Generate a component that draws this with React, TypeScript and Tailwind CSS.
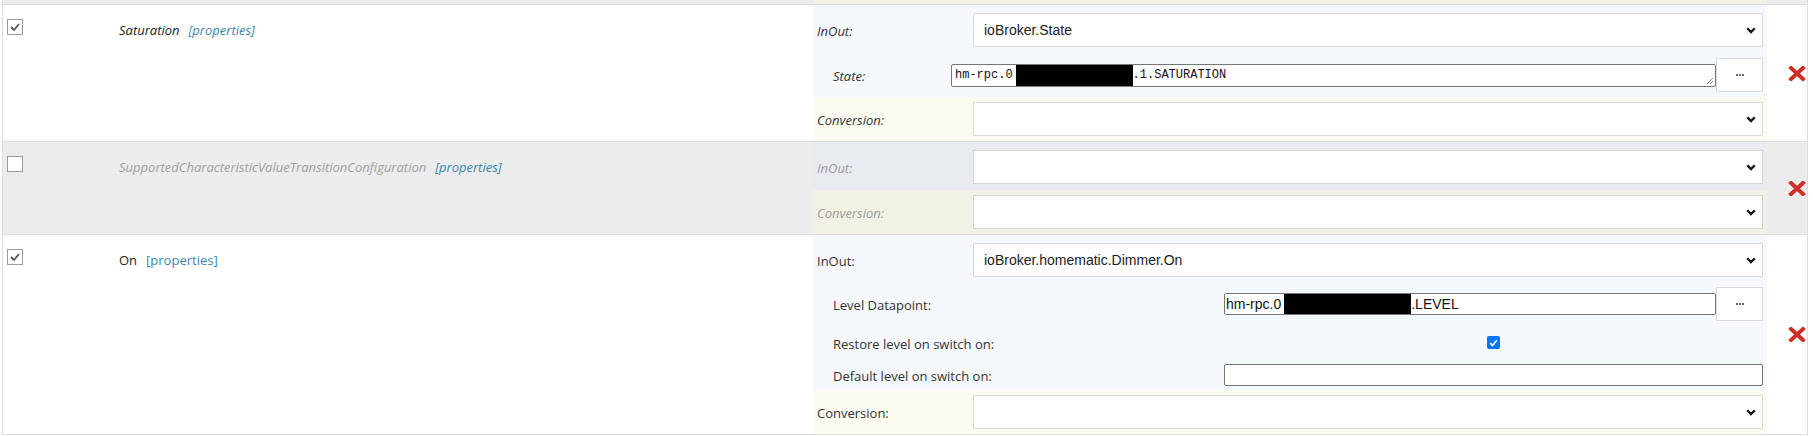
import React from "react";

const sans = "font-['Open_Sans',sans-serif]";
const arial = "font-['Liberation_Sans',Arial,sans-serif]";
const mono = "font-['Liberation_Mono','DejaVu_Sans_Mono',monospace]";

function OldCheck({ checked }: { checked: boolean }) {
  return (
    <span className="mt-[14px] ml-[4px] flex h-[16px] w-[16px] items-center justify-center border border-[#9a9a9a] bg-white">
      {checked && (
        <svg width="10" height="8" viewBox="0 0 10 8">
          <path d="M1 4l3 3 5-6" fill="none" stroke="#555" strokeWidth="1.8" />
        </svg>
      )}
    </span>
  );
}

function Chevron() {
  return (
    <svg width="10" height="7" viewBox="0 0 10 7" className="shrink-0">
      <path d="M1.2 1.2l3.8 3.8 3.8-3.8" fill="none" stroke="#111" strokeWidth="2.3" />
    </svg>
  );
}

function FakeSelect({ value, dim }: { value?: string; dim?: boolean }) {
  return (
    <div
      className={`flex h-[34px] flex-1 items-center justify-between border bg-white pl-[10px] pr-[6px] ${arial} text-[14px] text-[#222] ${
        dim ? "border-[#d3d6d9]" : "border-[#dcdcdc]"
      }`}
    >
      <span>{value}</span>
      <Chevron />
    </div>
  );
}

function DotsButton() {
  return (
    <div className="flex h-[34px] w-[47px] shrink-0 items-center justify-center gap-[1px] border border-[#dcdcdc] bg-white">
      <span className="h-[2px] w-[2px] bg-[#666]" />
      <span className="h-[2px] w-[2px] bg-[#666]" />
      <span className="h-[2px] w-[2px] bg-[#666]" />
    </div>
  );
}

function RedX() {
  return (
    <svg width="18" height="15" viewBox="0 0 18 15">
      <path d="M3 2l12 11M15 2L3 13" stroke="#cf2f2a" strokeWidth="4" strokeLinecap="square" />
    </svg>
  );
}

function Label({ text, italic, dim, indent }: { text: string; italic?: boolean; dim?: boolean; indent?: boolean }) {
  return (
    <span
      className={`${sans} text-[13px] ${italic ? "italic" : ""} ${dim ? "text-[#9a9a9a]" : "text-[#333]"} ${
        indent ? "pl-[20px]" : "pl-[4px]"
      }`}
    >
      {text}
    </span>
  );
}

interface RowProps {
  checked: boolean;
  name: string;
  italic?: boolean;
  dim?: boolean;
  children: React.ReactNode;
}

function Row({ checked, name, italic, dim, children }: RowProps) {
  return (
    <div className={`flex border-b border-[#dddddd] ${dim ? "bg-[#ececec]" : "bg-white"}`}>
      <div className="w-[116px] shrink-0">
        <OldCheck checked={checked} />
      </div>
      <div className={`flex h-[48px] w-[694px] shrink-0 items-center pt-[4px] ${sans} text-[13px]`}>
        <span className={`${italic ? "italic" : ""} ${dim ? "text-[#a0a0a0]" : "text-[#222]"}`}>{name}</span>
        <span className={`ml-[9px] ${italic ? "italic" : ""} text-[#3a87ad]`}>[properties]</span>
      </div>
      <div className="flex w-[954px] shrink-0 flex-col">{children}</div>
      <div className="flex w-[40px] shrink-0 items-center pl-[21px]">
        <RedX />
      </div>
    </div>
  );
}

export default function App() {
  return (
    <div className="h-[436px] w-[1813px] overflow-hidden bg-white">
      <div className="ml-[2px] w-[1806px] border-x border-[#dddddd]">
        {/* tail of the previous row */}
        <div className="flex h-[5px] border-b border-[#dddddd] bg-[#ececec]">
          <div className="w-[810px]" />
          <div className="w-[954px] bg-[#f1f1e6]" />
        </div>

        {/* Saturation */}
        <Row checked name="Saturation" italic>
          <div className="bg-[#f5f9fd] pt-[8px] pb-[5px]">
            <div className="flex items-center pr-[4px]">
              <div className="w-[160px]">
                <Label text="InOut:" italic />
              </div>
              <FakeSelect value="ioBroker.State" />
            </div>
            <div className="mt-[11px] flex h-[34px] items-center pr-[4px]">
              <div className="w-[138px]">
                <Label text="State:" italic indent />
              </div>
              <div className={`relative flex h-[23px] flex-1 items-center overflow-hidden rounded-[2px] border border-[#767676] bg-white pl-[3px] ${mono} text-[12px] text-[#111]`}>
                <span>hm-rpc.0</span>
                <span className="ml-[3px] h-[23px] w-[117px] bg-black" />
                <span>.1.SATURATION</span>
                <svg width="9" height="9" viewBox="0 0 9 9" className="absolute right-[1px] bottom-[1px]">
                  <path d="M8 2L2 8M8 5L5 8" stroke="#888" strokeWidth="1" />
                </svg>
              </div>
              <DotsButton />
            </div>
          </div>
          <div className="flex items-center bg-[#fbfbf1] py-[5px] pr-[4px]">
            <div className="w-[160px]">
              <Label text="Conversion:" italic />
            </div>
            <FakeSelect />
          </div>
        </Row>

        {/* SupportedCharacteristicValueTransitionConfiguration */}
        <Row checked={false} name="SupportedCharacteristicValueTransitionConfiguration" italic dim>
          <div className="flex items-center bg-[#e8ecf0] pt-[8px] pb-[6px] pr-[4px]">
            <div className="w-[160px]">
              <Label text="InOut:" italic dim />
            </div>
            <FakeSelect dim />
          </div>
          <div className="flex items-center bg-[#f1f1e6] py-[5px] pr-[4px]">
            <div className="w-[160px]">
              <Label text="Conversion:" italic dim />
            </div>
            <FakeSelect dim />
          </div>
        </Row>

        {/* On */}
        <Row checked name="On">
          <div className="bg-[#f5f9fd] pt-[8px] pb-[4px] pr-[4px]">
            <div className="flex items-center">
              <div className="w-[160px]">
                <Label text="InOut:" />
              </div>
              <FakeSelect value="ioBroker.homematic.Dimmer.On" />
            </div>
            <div className="mt-[10px] flex h-[34px] items-center">
              <div className="w-[411px]">
                <Label text="Level Datapoint:" indent />
              </div>
              <div className={`flex h-[22px] flex-1 items-center overflow-hidden rounded-[2px] border border-[#767676] bg-white pl-[1px] ${arial} text-[14px] text-[#111]`}>
                <span>hm-rpc.0</span>
                <span className="ml-[3px] h-[22px] w-[127px] bg-black" />
                <span>.LEVEL</span>
              </div>
              <DotsButton />
            </div>
            <div className="flex h-[43px] items-center">
              <div className="w-[411px]">
                <Label text="Restore level on switch on:" indent />
              </div>
              <div className="flex flex-1 justify-center">
                <span className="flex h-[13px] w-[13px] items-center justify-center rounded-[2px] bg-[#0075ff]">
                  <svg width="9" height="8" viewBox="0 0 9 8">
                    <path d="M1.2 4.2l2.3 2.3L7.8 1.3" fill="none" stroke="#fff" strokeWidth="1.7" />
                  </svg>
                </span>
              </div>
            </div>
            <div className="flex h-[22px] items-center">
              <div className="w-[411px]">
                <Label text="Default level on switch on:" indent />
              </div>
              <div className="h-[22px] flex-1 rounded-[2px] border border-[#767676] bg-white" />
            </div>
          </div>
          <div className="flex items-center bg-[#fbfbf1] py-[5px] pr-[4px]">
            <div className="w-[160px]">
              <Label text="Conversion:" />
            </div>
            <FakeSelect />
          </div>
        </Row>
      </div>
    </div>
  );
}
